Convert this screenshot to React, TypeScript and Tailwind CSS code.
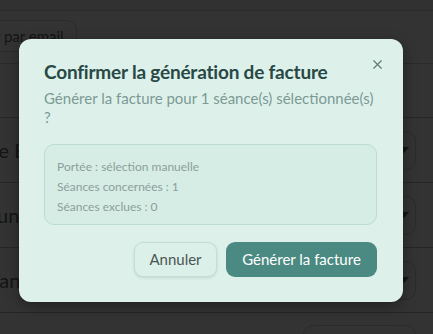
import { X } from "lucide-react";

function Caret() {
  return (
    <svg width="10" height="6" viewBox="0 0 10 6" className="text-[#151515]">
      <path d="M0 0h10L5 6z" fill="currentColor" />
    </svg>
  );
}

function Row({ label, shift }: { label: string; shift: string }) {
  return (
    <div className="h-[65px] border-b border-[#262626] flex items-center justify-between overflow-hidden">
      <span className={`text-[20px] text-[#141414] whitespace-nowrap ${shift}`}>{label}</span>
      <div className="shrink-0 w-[120px] h-[39px] mr-[17px] rounded-[10px] border border-[#2b2b2b] flex items-center justify-end pr-[6px]">
        <Caret />
      </div>
    </div>
  );
}

export default function App() {
  return (
    <div
      className="relative w-[433px] h-[334px] overflow-hidden bg-[#333333]"
      style={{ fontFamily: "Lato, 'Noto Sans', sans-serif" }}
    >
      <div className="h-[11px] border-b border-[#2a2a2a] bg-[#313131]" />
      <div className="h-[53px] border-b border-[#2b2b2b] flex items-start pt-[9px] overflow-hidden">
        <div className="shrink-0 -ml-[66px] h-[32px] px-[12px] rounded-[10px] border border-[#2b2b2b] flex items-center text-[15px] text-[#141414] whitespace-nowrap">
          Envoyer par email
        </div>
      </div>
      <div className="h-[54px] border-b border-[#262626]" />
      <Row label="Une Bo" shift="-ml-[27px]" />
      <Row label="Aucun" shift="-ml-[37px]" />
      <Row label="Séance" shift="-ml-[22px]" />
      <div className="flex justify-end pt-[12px] pr-[17px]">
        <div className="w-[113px] h-[39px] rounded-[10px] border border-[#2b2b2b]" />
      </div>

      <div className="absolute left-[19px] top-[39px] w-[384px] h-[263px] rounded-[12px] bg-[#ddf1ea] shadow-[0_4px_14px_rgba(0,0,0,0.35)] pl-[25px] pr-[26px] pt-[19px]">
        <button className="absolute right-[18px] top-[18px] text-[#5f7571]">
          <X size={15} strokeWidth={1.8} />
        </button>
        <h2 className="text-[19px] font-bold leading-[28px] text-[#284846] tracking-[-0.2px]">
          Confirmer la génération de facture
        </h2>
        <p className="mt-[3px] text-[15px] leading-[19px] text-[#7c9994] pr-[2px]">
          Générer la facture pour 1 séance(s) sélectionnée(s) ?
        </p>
        <div className="mt-[17px] h-[81px] rounded-[10px] border border-[#bcdcd1] bg-[#d6ede5] px-[12px] pt-[12px] flex flex-col gap-[1px] text-[12px] leading-[19px] text-[#8b9f9b]">
          <div>Portée : sélection manuelle</div>
          <div>Séances concernées : 1</div>
          <div>Séances exclues : 0</div>
        </div>
        <div className="mt-[17px] flex justify-end gap-[9px]">
          <button className="w-[83px] h-[35px] rounded-[9px] border border-[#c3dfd5] bg-[#dcf0ea] shadow-[0_1px_3px_rgba(0,0,0,0.12)] text-[15px] text-[#4b5654]">
            Annuler
          </button>
          <button className="w-[151px] h-[35px] rounded-[9px] bg-[#4a8a82] text-[15px] text-white">
            Générer la facture
          </button>
        </div>
      </div>
    </div>
  );
}
